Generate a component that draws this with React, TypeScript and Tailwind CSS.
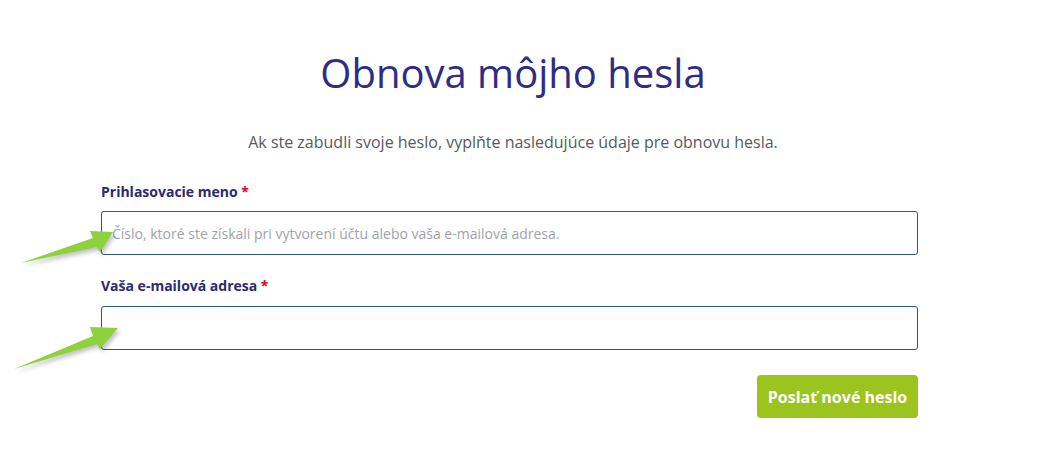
import React from "react";

function Arrow({ points }: { points: string }) {
  return (
    <polygon
      points={points}
      fill="#8fd13c"
      style={{ filter: "drop-shadow(2px 3px 2px rgba(0,0,0,0.25))" }}
    />
  );
}

export default function App() {
  return (
    <div className="relative min-h-[456px] w-full bg-white font-['Open_Sans',sans-serif]">
      <div className="ml-[101px] w-[817px] pt-[49px]">
        <h1 className="text-center text-[40px] leading-[48px] font-medium text-[#2d2c86] pl-[7px]">
          Obnova môjho hesla
        </h1>
        <p className="mt-[33px] text-center text-[16px] leading-[24px] text-[#555a60] pl-[7px]">
          Ak ste zabudli svoje heslo, vyplňte nasledujúce údaje pre obnovu hesla.
        </p>

        <form className="mt-[28px] flex flex-col">
          <label className="text-[14px] leading-[20px] font-bold text-[#2b2a72]">
            Prihlasovacie meno <span className="text-[#e3001b]">*</span>
          </label>
          <input
            type="text"
            placeholder="Číslo, ktoré ste získali pri vytvorení účtu alebo vaša e-mailová adresa."
            className="mt-[9px] h-[44px] w-full rounded-[3px] border border-[#2f5a73] px-[10px] text-[14px] text-[#333] placeholder:text-[#a0a3a8] outline-none"
          />

          <label className="mt-[21px] text-[14px] leading-[20px] font-bold text-[#2b2a72]">
            Vaša e-mailová adresa <span className="text-[#e3001b]">*</span>
          </label>
          <input
            type="email"
            className="mt-[10px] h-[44px] w-full rounded-[3px] border border-[#2f5a73] px-[10px] text-[14px] text-[#333] outline-none"
          />

          <div className="mt-[25px] flex justify-end">
            <button
              type="button"
              className="h-[43px] w-[161px] rounded-[4px] bg-[#9cc41f] text-[16px] font-bold text-white"
            >
              Poslať nové heslo
            </button>
          </div>
        </form>
      </div>

      <svg
        className="pointer-events-none absolute left-0 top-0"
        width="200"
        height="400"
        viewBox="0 0 200 400"
      >
        <Arrow points="21,263 93,238 90,231 113,232 100,252 97,247" />
        <Arrow points="14,369 93,336 90,327 118,328 100,349 97,344" />
      </svg>
    </div>
  );
}
